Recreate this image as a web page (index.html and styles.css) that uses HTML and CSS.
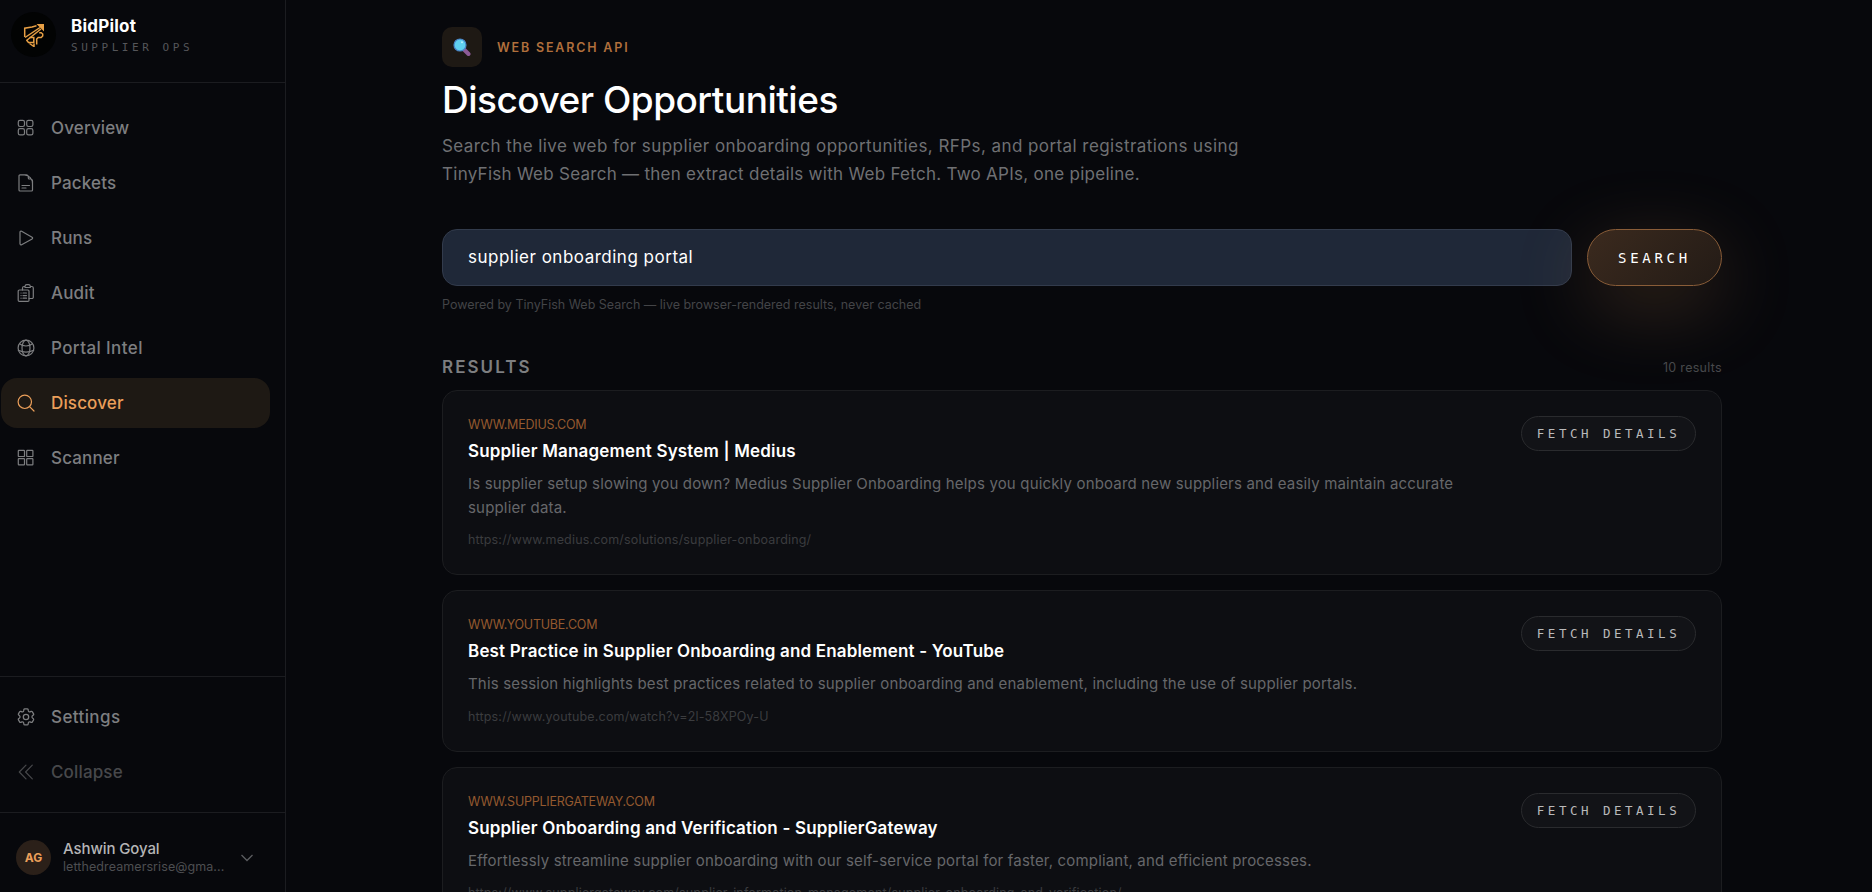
FILE: index.html
```html
<!DOCTYPE html>
<html lang="en">
<head>
  <meta charset="UTF-8">
  <meta name="viewport" content="width=device-width, initial-scale=1.0">
  <title>BidPilot - Discover</title>
  <link rel="stylesheet" href="styles.css">
</head>
<body>
  <aside class="sidebar">
    <div class="brand">
      <div class="brand-logo">
        <svg width="22" height="24" viewBox="0 0 22 24" fill="none" stroke="#e8a045" stroke-width="1.5">
          <path d="M1.700 14V5.200L9 4l4.500-1.300"/>
          <path d="M2 14.500 17 4.500"/>
          <path d="M13.500 1H21v7.500z" fill="#e8a045" stroke="none"/>
          <path d="M3.500 17.500 18 6"/>
          <path d="M6.500 14.500h4.300v5H5.500L3.500 17"/>
          <path d="M13.700 21.500V16l1.500-1.500h3l1.500-1.500v-2l-1.500-1.300h-2"/>
          <path d="M6.500 20.500l4.500 3v-3"/>
        </svg>
      </div>
      <div class="brand-text">
        <div class="brand-name">BidPilot</div>
        <div class="brand-sub">SUPPLIER OPS</div>
      </div>
    </div>

    <nav class="nav">
      <a class="nav-item">
        <svg class="icon" viewBox="0 0 18 18"><rect x="1.300" y="1.300" width="6.200" height="6.200" rx="1.700"/><rect x="9.700" y="1.300" width="6.200" height="6.200" rx="1.700"/><rect x="1.300" y="9.700" width="6.200" height="6.200" rx="1.700"/><rect x="9.700" y="9.700" width="6.200" height="6.200" rx="1.700"/></svg>
        <span>Overview</span>
      </a>
      <a class="nav-item">
        <svg class="icon" viewBox="0 0 18 18"><path d="M15.500 9.500V7a2 2 0 0 0-2-2h-1.200a1 1 0 0 1-1-1V2.800a2 2 0 0 0-2-2H3a1 1 0 0 0-1 1V16a1 1 0 0 0 1 1h11.500a1 1 0 0 0 1-1V9.500A8.700 8.700 0 0 0 7.500.800M5 11.500h7.500M5 14h4"/></svg>
        <span>Packets</span>
      </a>
      <a class="nav-item">
        <svg class="icon" viewBox="0 0 18 18"><path d="M3 3.200c0-.8.900-1.300 1.600-.9l10.500 5.900c.7.400.7 1.300 0 1.700L4.600 15.700c-.7.400-1.600-.1-1.600-.9z"/></svg>
        <span>Runs</span>
      </a>
      <a class="nav-item">
        <svg class="icon" viewBox="0 0 18 18"><path d="M12 14.500h3a1.300 1.300 0 0 0 1.300-1.300V4a1.500 1.500 0 0 0-1.500-1.500h-1.300M8 2.500H7A1.500 1.500 0 0 0 5.500 4v2M8 3.500V2.300A1.800 1.800 0 0 1 9.800.700h1.700a1.800 1.800 0 0 1 1.800 1.600v1.200z"/><rect x="1.200" y="6" width="10.800" height="11.300" rx="1.100"/><path d="M4 9h.1M6 9h3.500M4 11.600h.1M6 11.600h3.500M4 14.200h.1M6 14.200h3.500"/></svg>
        <span>Audit</span>
      </a>
      <a class="nav-item wide">
        <svg class="icon" viewBox="0 0 18 18"><circle cx="9" cy="9" r="7.900"/><ellipse cx="9" cy="9" rx="4" ry="7.900"/><path d="M2.500 4.800C6 7.700 12 7.700 15.500 4.800M1.300 11.200c4.800 2.300 10.600 2.300 15.400 0"/></svg>
        <span>Portal Intel</span>
      </a>
      <a class="nav-item active">
        <svg class="icon" viewBox="0 0 18 18"><circle cx="7.800" cy="7.800" r="6.700"/><path d="M12.600 12.600 17 17"/></svg>
        <span>Discover</span>
      </a>
      <a class="nav-item">
        <svg class="icon" viewBox="0 0 18 18"><rect x="1.300" y="1.300" width="6.200" height="6.200" rx=".6"/><rect x="9.700" y="1.300" width="6.200" height="6.200" rx=".6"/><rect x="1.300" y="9.700" width="6.200" height="6.200" rx=".6"/><rect x="9.700" y="9.700" width="6.200" height="6.200" rx=".6"/></svg>
        <span>Scanner</span>
      </a>
    </nav>

    <div class="nav nav-bottom">
      <a class="nav-item wide">
        <svg class="icon gear" viewBox="2 2 20 20"><path d="M9.600 3.900c.1-.5.600-.9 1.100-.9h2.600c.5 0 1 .4 1.100.9l.2 1.300c.1.400.3.700.6.900l.2.100c.4.200.8.200 1.100.1l1.200-.5c.5-.2 1.100 0 1.400.5l1.300 2.200c.3.500.2 1.100-.3 1.400l-1 .8c-.3.200-.4.600-.4 1v.3c0 .4.100.7.400 1l1 .8c.4.400.5 1 .3 1.400l-1.300 2.200c-.3.500-.8.700-1.400.5l-1.200-.5c-.4-.1-.8-.1-1.100.1l-.2.100c-.3.200-.5.500-.6.900l-.2 1.300c-.1.500-.6.900-1.100.9h-2.600c-.5 0-1-.4-1.100-.9l-.2-1.300c-.1-.4-.3-.7-.6-.9l-.2-.1c-.4-.2-.8-.2-1.100-.1l-1.200.5c-.5.200-1.100 0-1.400-.5l-1.300-2.200c-.3-.5-.2-1.100.3-1.400l1-.8c.3-.2.4-.6.400-1v-.3c0-.4-.1-.7-.4-1l-1-.8c-.4-.4-.5-1-.3-1.400l1.300-2.200c.3-.5.800-.7 1.400-.5l1.200.5c.4.100.8.100 1.100-.1l.2-.1c.3-.2.500-.5.600-.9z"/><circle cx="12" cy="12" r="3"/></svg>
        <span>Settings</span>
      </a>
      <a class="nav-item muted">
        <svg class="icon" viewBox="0 0 18 18"><path d="M9 15.800 2.300 9 9 2.200M15.300 15.800 8.600 9l6.700-6.800"/></svg>
        <span>Collapse</span>
      </a>
    </div>

    <div class="user">
      <div class="avatar">AG</div>
      <div class="user-info">
        <div class="user-name">Ashwin Goyal</div>
        <div class="user-email">letthedreamersrise@gma...</div>
      </div>
      <svg class="chevron" viewBox="0 0 14 8"><path d="m1.500 1 5.500 5.500L12.500 1"/></svg>
    </div>
  </aside>

  <main class="main">
    <header class="page-head">
      <div class="eyebrow">
        <div class="eyebrow-icon">
          <svg width="18" height="18" viewBox="0 0 18 18"><path d="m11.500 12 4 4" stroke="#8c5a96" stroke-width="4" stroke-linecap="round"/><circle cx="7" cy="7" r="6" fill="#5fd0f0" stroke="#4a86c8" stroke-width="1.200"/><circle cx="9" cy="4.300" r="1" fill="#b8f0ff"/></svg>
        </div>
        <span class="eyebrow-text">WEB SEARCH API</span>
      </div>
      <h1>Discover Opportunities</h1>
      <p class="lead"><span class="lead-first">Search the live web for supplier onboarding opportunities, RFPs, and portal registrations using</span><br>TinyFish Web Search — then extract details with Web Fetch. Two APIs, one pipeline.</p>
    </header>

    <div class="search">
      <div class="search-input">supplier onboarding portal</div>
      <button class="search-btn">SEARCH</button>
    </div>
    <div class="hint">Powered by TinyFish Web Search — live browser-rendered results, never cached</div>

    <div class="results-head">
      <h2>RESULTS</h2>
      <span class="count">10 results</span>
    </div>

    <div class="results">
      <article class="card">
        <div class="card-body">
          <div class="domain">WWW.MEDIUS.COM</div>
          <h3>Supplier Management System | Medius</h3>
          <p class="desc">Is supplier setup slowing you down? Medius Supplier Onboarding helps you quickly onboard new suppliers and easily maintain accurate<br>supplier data.</p>
          <div class="url">https://www.medius.com/solutions/supplier-onboarding/</div>
        </div>
        <button class="fetch-btn">FETCH DETAILS</button>
      </article>
      <article class="card">
        <div class="card-body">
          <div class="domain">WWW.YOUTUBE.COM</div>
          <h3>Best Practice in Supplier Onboarding and Enablement - YouTube</h3>
          <p class="desc">This session highlights best practices related to supplier onboarding and enablement, including the use of supplier portals.</p>
          <div class="url">https://www.youtube.com/watch?v=2l-58XPOy-U</div>
        </div>
        <button class="fetch-btn">FETCH DETAILS</button>
      </article>
      <article class="card">
        <div class="card-body">
          <div class="domain">WWW.SUPPLIERGATEWAY.COM</div>
          <h3>Supplier Onboarding and Verification - SupplierGateway</h3>
          <p class="desc">Effortlessly streamline supplier onboarding with our self-service portal for faster, compliant, and efficient processes.</p>
          <div class="url">https://www.suppliergateway.com/supplier-information-management/supplier-onboarding-and-verification/</div>
        </div>
        <button class="fetch-btn">FETCH DETAILS</button>
      </article>
    </div>
  </main>
</body>
</html>
```
FILE: styles.css
```css
* {
  box-sizing: border-box;
}
body {
  margin: 0;
  height: 892px;
  display: flex;
  overflow: hidden;
  background: #07080c;
  color: #ffffff;
  font-family: Inter, "Liberation Sans", sans-serif;
}
h1, h2, h3, p {
  margin: 0;
}
button {
  font-family: "DejaVu Sans Mono", monospace;
  flex-shrink: 0;
}
.sidebar {
  width: 286px;
  flex-shrink: 0;
  display: flex;
  flex-direction: column;
  border-right: 1px solid #1b1c20;
}
.brand {
  height: 83px;
  padding: 12px 11px;
  display: flex;
  gap: 15px;
  border-bottom: 1px solid #1b1c20;
}
.brand-logo {
  width: 45px;
  height: 45px;
  border-radius: 50%;
  background: #020303;
  display: flex;
  align-items: center;
  justify-content: center;
}
.brand-text {
  padding-top: 1px;
}
.brand-name {
  font-size: 17px;
  font-weight: 700;
  line-height: 27px;
  letter-spacing: 0.2px;
}
.brand-sub {
  font-family: "DejaVu Sans Mono", monospace;
  font-size: 11px;
  line-height: 16px;
  letter-spacing: 3.55px;
  color: #55565a;
}
.nav {
  display: flex;
  flex-direction: column;
  gap: 5px;
  padding: 20px 15px 0 1px;
  flex: 1;
}
.nav-bottom {
  flex: none;
  height: 136px;
  padding-top: 15px;
  border-top: 1px solid #1b1c20;
}
.nav-item {
  height: 50px;
  border-radius: 16px;
  padding-left: 16px;
  display: flex;
  align-items: center;
  gap: 16px;
  font-size: 17px;
  font-weight: 500;
  letter-spacing: 0.15px;
  color: #7d7e80;
}
.nav-item.wide {
  letter-spacing: 0.4px;
}
.nav-item.active {
  background: #1e1914;
  color: #eb9f5a;
}
.nav-item.muted {
  color: #47484b;
}
.icon {
  width: 18px;
  height: 18px;
  fill: none;
  stroke: currentColor;
  stroke-width: 1.2;
  stroke-linecap: round;
  stroke-linejoin: round;
}
.gear {
  stroke-width: 1.4;
}
.user {
  height: 80px;
  padding: 10px 31px 0 16px;
  display: flex;
  align-items: center;
  border-top: 1px solid #1b1c20;
}
.avatar {
  width: 35px;
  height: 35px;
  margin-right: 12px;
  border-radius: 50%;
  background: #2b2019;
  color: #eb9f5a;
  font-size: 12px;
  font-weight: 700;
  display: flex;
  align-items: center;
  justify-content: center;
}
.user-info {
  width: 177px;
  white-space: nowrap;
}
.user-name {
  font-size: 15px;
  font-weight: 500;
  line-height: 19px;
  letter-spacing: -0.1px;
  color: #b5b5b6;
}
.user-email {
  font-size: 12.5px;
  line-height: 18px;
  letter-spacing: 0.08px;
  color: #4d4e51;
}
.chevron {
  width: 14px;
  height: 8px;
  flex-shrink: 0;
  fill: none;
  stroke: #5b5c60;
  stroke-width: 1.3;
}
.main {
  flex: 1;
  padding: 27px 150px 0 156px;
}
.eyebrow {
  display: flex;
  align-items: center;
  gap: 15px;
}
.eyebrow-icon {
  width: 40px;
  height: 40px;
  border-radius: 10px;
  background: #1e1914;
  display: flex;
  align-items: center;
  justify-content: center;
}
.eyebrow-text {
  font-size: 12.5px;
  font-weight: 600;
  letter-spacing: 1.82px;
  color: #b06f3c;
}
h1 {
  margin-top: 9px;
  font-size: 37px;
  font-weight: 500;
  line-height: 47px;
  letter-spacing: -0.5px;
}
.lead {
  margin-top: 9px;
  font-size: 17px;
  line-height: 28px;
  letter-spacing: 0.27px;
  color: #6f7073;
}
.lead-first {
  letter-spacing: 0.43px;
}
.search {
  margin-top: 41px;
  display: flex;
  gap: 15px;
}
.search-input {
  flex: 1;
  height: 57px;
  padding: 0 25px;
  border: 1px solid #323b4c;
  border-radius: 15px;
  background: #1f2838;
  font-size: 17px;
  line-height: 54px;
  letter-spacing: 0.5px;
}
.search-btn {
  width: 135px;
  height: 57px;
  border: 1px solid #8a5d38;
  border-radius: 29px;
  background: linear-gradient(135deg, #3b2a1e, #231b16);
  box-shadow: 0 20px 80px rgba(235, 159, 90, 0.22);
  color: #ffffff;
  font-size: 14px;
  letter-spacing: 3.7px;
}
.hint {
  margin-top: 10px;
  font-size: 12.5px;
  line-height: 18px;
  color: #434447;
}
.results-head {
  margin-top: 40px;
  height: 26px;
  display: flex;
  justify-content: space-between;
  align-items: center;
}
h2 {
  font-size: 17px;
  font-weight: 600;
  letter-spacing: 2.05px;
  color: #7d7e80;
}
.count {
  font-size: 12.5px;
  letter-spacing: 0.3px;
  color: #47484b;
}
.results {
  margin-top: 10px;
  display: flex;
  flex-direction: column;
  gap: 15px;
}
.card {
  display: flex;
  justify-content: space-between;
  align-items: flex-start;
  padding: 25px;
  border: 1px solid #1c1d20;
  border-radius: 15px;
  background: #0d0e12;
  white-space: nowrap;
}
.domain {
  font-size: 12.5px;
  line-height: 18px;
  letter-spacing: -0.22px;
  color: #94592f;
}
h3 {
  margin-top: 5px;
  font-size: 17px;
  font-weight: 600;
  line-height: 25px;
  letter-spacing: 0.17px;
}
.desc {
  margin-top: 8px;
  font-size: 15px;
  line-height: 23.5px;
  letter-spacing: 0.17px;
  color: #66676a;
}
.url {
  margin-top: 12px;
  font-size: 12.5px;
  line-height: 18px;
  letter-spacing: 0.17px;
  color: #3b3c3f;
}
.fetch-btn {
  width: 175px;
  height: 35px;
  border: 1px solid #2a2b2e;
  border-radius: 18px;
  background: #121317;
  color: #b9b9ba;
  font-size: 12.5px;
  letter-spacing: 3.5px;
}
```
